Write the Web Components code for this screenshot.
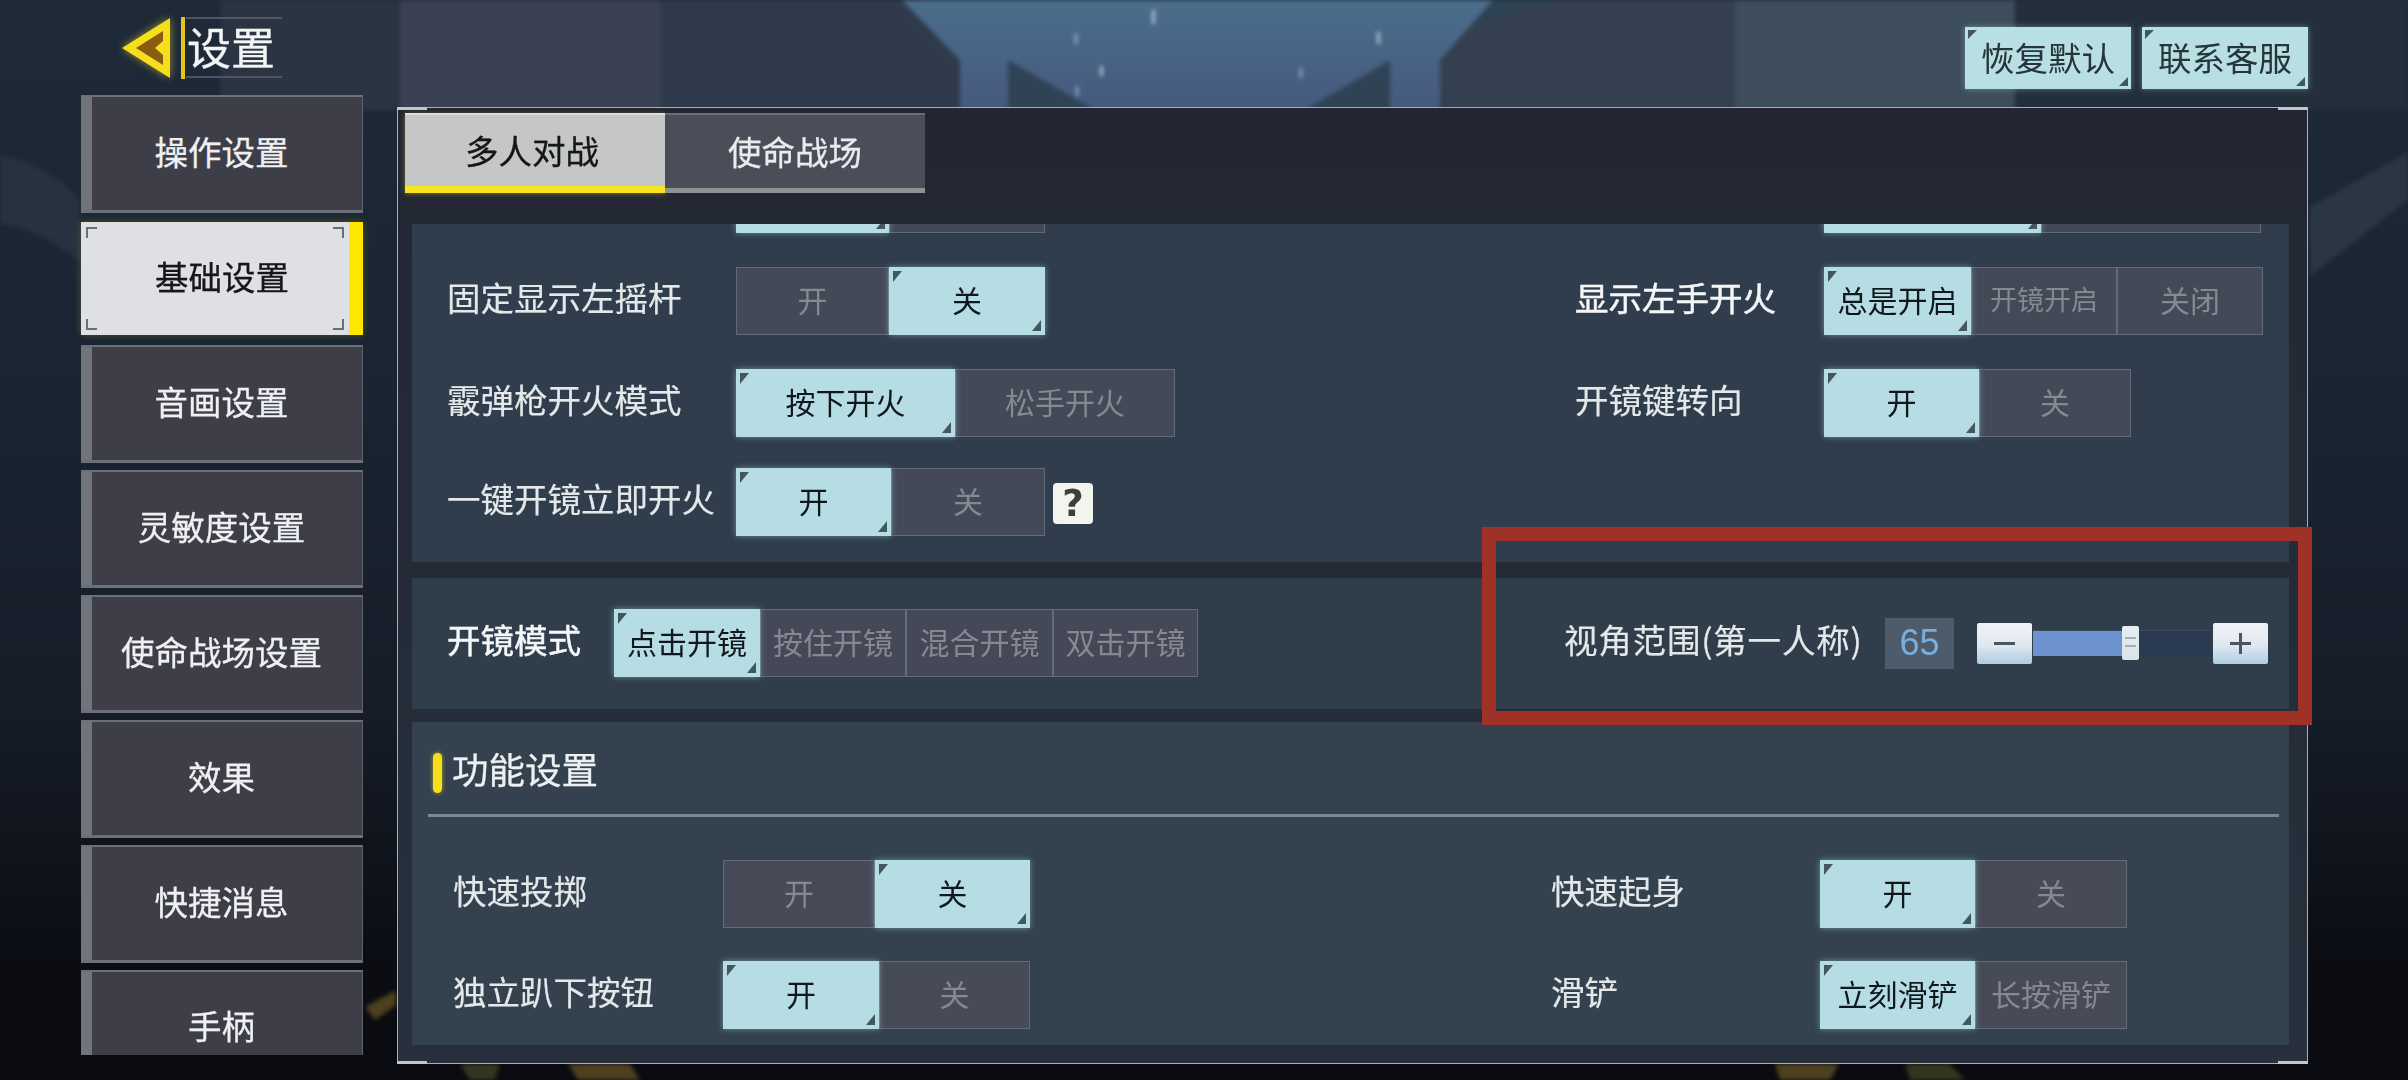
<!DOCTYPE html>
<html lang="zh">
<head>
<meta charset="utf-8">
<title>设置</title>
<style>
  html, body { margin: 0; padding: 0; background: #0b0d13; }
  body { font-family: "Noto Sans CJK SC", "Liberation Sans", sans-serif; }
</style>
</head>
<body>

<settings-screen>
  <screen-header slot="header">
    <corner-button>恢复默认</corner-button>
    <corner-button>联系客服</corner-button>
  </screen-header>

  <side-nav slot="nav">
    <nav-item>操作设置</nav-item>
    <nav-item active>基础设置</nav-item>
    <nav-item>音画设置</nav-item>
    <nav-item>灵敏度设置</nav-item>
    <nav-item>使命战场设置</nav-item>
    <nav-item>效果</nav-item>
    <nav-item>快捷消息</nav-item>
    <nav-item last>手柄</nav-item>
  </side-nav>

  <settings-frame slot="main">
    <mode-tab slot="tabs" active>多人对战</mode-tab>
    <mode-tab slot="tabs">使命战场</mode-tab>

    <setting-panel style="--pad:0 0 0 35px;--c1:1128px;--bg:#2f3d4c;height:338px;margin-top:31px">
      <setting-row style="--label-w:289px;margin-top:-59px"><seg-toggle slot="control" options="," active="0" cols="153,156"></seg-toggle></setting-row>
      <setting-row style="--label-w:249px;margin-top:-59px"><seg-toggle slot="control" options="," active="0" cols="217,220"></seg-toggle></setting-row>

      <setting-row style="--label-w:289px">固定显示左摇杆<seg-toggle slot="control" options="开,关" active="1" cols="153,156"></seg-toggle></setting-row>
      <setting-row style="--label-w:249px" strong>显示左手开火<seg-toggle slot="control" options="总是开启,开镜开启,关闭" active="0" small="1" cols="147,146,146"></seg-toggle></setting-row>

      <setting-row style="--label-w:289px">霰弹枪开火模式<seg-toggle slot="control" options="按下开火,松手开火" active="0" cols="219,220"></seg-toggle></setting-row>
      <setting-row style="--label-w:249px">开镜键转向<seg-toggle slot="control" options="开,关" active="0" cols="155,152"></seg-toggle></setting-row>

      <setting-row style="--label-w:289px;margin-top:-3px">一键开镜立即开火<seg-toggle slot="control" options="开,关" active="0" cols="155,154"></seg-toggle><help-badge slot="control"></help-badge></setting-row>
    </setting-panel>

    <setting-panel style="--pad:31px 0 32px 35px;--c1:1117px;--bg:#303e4c;margin-top:16px">
      <setting-row style="--label-w:167px" strong>开镜模式<seg-toggle slot="control" options="点击开镜,按住开镜,混合开镜,双击开镜" active="0" cols="146,146,147,145"></seg-toggle></setting-row>
      <setting-row style="--label-w:321px;--label-ls:.8px">视角范围(第一人称)<fov-slider slot="control" value="65" percent="50"></fov-slider></setting-row>
    </setting-panel>

    <setting-panel style="--pad:0 0 16px 41px;--c1:1098px;--gap:33px;--bg:#33424e;margin-top:13px">
      <section-title slot="head">功能设置</section-title>
      <setting-row style="--label-w:270px">快速投掷<seg-toggle slot="control" options="开,关" active="1" cols="152,155"></seg-toggle></setting-row>
      <setting-row style="--label-w:269px">快速起身<seg-toggle slot="control" options="开,关" active="0" cols="155,152"></seg-toggle></setting-row>
      <setting-row style="--label-w:270px">独立趴下按钮<seg-toggle slot="control" options="开,关" active="0" cols="156,151"></seg-toggle></setting-row>
      <setting-row style="--label-w:269px">滑铲<seg-toggle slot="control" options="立刻滑铲,长按滑铲" active="0" cols="155,152"></seg-toggle></setting-row>
    </setting-panel>
  </settings-frame>

  <highlight-box slot="overlay"></highlight-box>
</settings-screen>

<script>
const FONT = '"Noto Sans CJK SC", "Liberation Sans", sans-serif';

class SettingsScreen extends HTMLElement {
  constructor() {
    super();
    this.attachShadow({ mode: "open" });
    this.shadowRoot.innerHTML = `
      <style>
        :host{
          display:block;
          position:relative;
          width:2408px;
          height:1080px;
          overflow:hidden;
          background:linear-gradient(180deg,#1e2a38 0,#1b2634 300px,#161d29 700px,#0b0d13 960px,#0a0b10 100%);
          font-family:${FONT};
          color:#e8ebee;
        }
        .bg{position:absolute;left:0;top:0;width:2408px;height:1080px;filter:blur(2px)}
        .layout{
          position:relative;
          display:grid;
          grid-template-columns:282px 1911px;
          grid-template-rows:95px 1fr;
          column-gap:34px;
          padding-left:81px;
          height:1080px;
          box-sizing:border-box;
          filter:blur(.55px);
        }
        .header{grid-column:1 / 3}
        .main{padding-top:12px}
      </style>
      <svg class="bg" viewBox="0 0 2408 1080" aria-hidden="true">
        <defs>
          <linearGradient id="core" x1="0" y1="0" x2="0" y2="1">
            <stop offset="0" stop-color="#4b6e8c"/><stop offset="1" stop-color="#46597c"/>
          </linearGradient>
        </defs>
        <rect x="220" y="0" width="180" height="110" fill="#2a3442"/>
        <rect x="400" y="0" width="260" height="110" fill="#3a4154"/>
        <rect x="660" y="0" width="300" height="110" fill="#2f3b4c"/>
        <rect x="1440" y="0" width="300" height="110" fill="#34404f"/>
        <polygon points="1440,30 1560,0 1440,0" fill="#2d4253"/>
        <rect x="1735" y="0" width="280" height="110" fill="#3d4d5b"/>
        <rect x="2015" y="0" width="393" height="110" fill="#242f3c"/>
        <polygon points="902,0 1493,0 1440,60 1440,110 960,110 960,60" fill="url(#core)"/>
        <polygon points="1008,60 1095,110 1008,110" fill="#2f4355"/>
        <polygon points="1390,60 1305,110 1390,110" fill="#2f4355"/>
        <g fill="#cfe0ee" opacity=".75">
          <rect x="1152" y="10" width="3" height="14"/><rect x="1377" y="32" width="3" height="12"/>
          <rect x="1075" y="34" width="2" height="10"/><rect x="1100" y="66" width="3" height="10"/>
          <rect x="1300" y="68" width="2" height="10"/><rect x="1076" y="86" width="2" height="10"/>
        </g>
        <path d="M0 155 Q50 165 80 200 L80 262 Q40 228 0 224Z" fill="#263240"/>
        <polygon points="2310,207 2408,152 2408,200 2310,276" fill="#2a3743"/>
        <g fill="#4e4120">
          <polygon points="568,1064 630,1064 640,1080 578,1080"/>
          <polygon points="1775,1064 1839,1064 1830,1080 1780,1080"/>
          <polygon points="365,1007 396,990 396,1005 375,1020"/>
        </g>
        <g fill="#33361f">
          <polygon points="460,1064 500,1064 495,1080 470,1080"/>
          <polygon points="1905,1064 1950,1064 1965,1080 1910,1080"/>
        </g>
      </svg>
      <div class="layout">
        <div class="header"><slot name="header"></slot></div>
        <div class="nav"><slot name="nav"></slot></div>
        <div class="main"><slot name="main"></slot></div>
        <slot name="overlay"></slot>
      </div>
    `;
  }
}

class ScreenHeader extends HTMLElement {
  constructor() {
    super();
    this.attachShadow({ mode: "open" });
    this.shadowRoot.innerHTML = `
      <style>
        :host{display:flex;height:95px;align-items:flex-start;justify-content:space-between}
        .back{display:flex;margin:17px 0 0 39px;align-items:stretch}
        svg{width:52px;height:62px;filter:drop-shadow(0 0 4px rgba(255,225,40,.55))}
        .bar{width:4px;background:#e5c51c;margin-left:9px}
        .title{
          width:96px;
          margin-left:1px;
          height:61px;
          box-sizing:border-box;
          border-top:2px solid #4f5662;
          border-bottom:2px solid #4f5662;
          padding-left:1px;
          font-size:44px;
          line-height:54px;
          color:#f2f4f5;
          -webkit-text-stroke:.3px currentColor;
        }
        .actions{display:flex;gap:11px;margin-top:27px}
      </style>
      <div class="back">
        <svg viewBox="0 0 52 62">
          <polygon points="2,31 50,1 50,61" fill="#f5df1c"/>
          <polygon points="16,31 43,14 43,24 35,31 43,38 43,48" fill="#8a5c12"/>
        </svg>
        <div class="bar"></div>
        <div class="title">设置</div>
      </div>
      <div class="actions"><slot></slot></div>
    `;
  }
}

class CornerButton extends HTMLElement {
  constructor() {
    super();
    this.attachShadow({ mode: "open" });
    this.shadowRoot.innerHTML = `
      <style>
        :host{
          display:flex;
          position:relative;
          width:166px;
          height:62px;
          box-sizing:border-box;
          padding-bottom:3px;
          align-items:center;
          justify-content:center;
          background:#b8dfe2;
          box-shadow:0 0 6px rgba(170,225,230,.45);
          color:#26343c;
          font-size:33.5px;
        }
        i{position:absolute;width:9px;height:9px}
        .a{left:3px;top:3px;background:#43585c;clip-path:polygon(0 0,100% 0,0 100%)}
        .b{right:3px;bottom:3px;background:#43585c;clip-path:polygon(100% 0,100% 100%,0 100%)}
      </style>
      <i class="a"></i><i class="b"></i><slot></slot>
    `;
  }
}

class SideNav extends HTMLElement {
  constructor() {
    super();
    this.attachShadow({ mode: "open" });
    this.shadowRoot.innerHTML = `
      <style>:host{display:flex;flex-direction:column;gap:7px}</style>
      <slot></slot>
    `;
  }
}

class NavItem extends HTMLElement {
  constructor() {
    super();
    this.attachShadow({ mode: "open" });
    this.shadowRoot.innerHTML = `
      <style>
        :host{
          display:flex;
          position:relative;
          height:118px;
          box-sizing:border-box;
          padding-bottom:6px;
          align-items:center;
          justify-content:center;
          font-size:33.5px;
          color:#eef0f2;
          background:#3e3e49;
          border-top:2px solid #6d7078;
          border-right:1px solid #5f626a;
          border-bottom:3px solid #6d7078;
          box-shadow:inset 11px 0 #70747b;
          -webkit-text-stroke:.3px currentColor;
        }
        :host([active]){
          height:113px;
          margin:2px 0 3px;
          border:0;
          background:#dfe0e4;
          color:#15171a;
          box-shadow:inset -14px 0 #ffe600, 0 0 7px rgba(255,225,30,.25);
        }
        :host([last]){height:85px;border-bottom:0;padding:22px 0 0}
        i{display:none;position:absolute;width:9px;height:9px;border:0 solid #6a6e72}
        :host([active]) i{display:block}
        .tl{left:5px;top:5px;border-width:2px 0 0 2px}
        .tr{right:19px;top:5px;border-width:2px 2px 0 0}
        .bl{left:5px;bottom:5px;border-width:0 0 2px 2px}
        .br{right:19px;bottom:5px;border-width:0 2px 2px 0}
      </style>
      <i class="tl"></i><i class="tr"></i><i class="bl"></i><i class="br"></i>
      <slot></slot>
    `;
  }
}

class SettingsFrame extends HTMLElement {
  constructor() {
    super();
    this.attachShadow({ mode: "open" });
    this.shadowRoot.innerHTML = `
      <style>
        :host{
          display:block;
          position:relative;
          height:957px;
          box-sizing:border-box;
          padding:5px 18px 0 14px;
          background:linear-gradient(180deg,#232632 0,#222834 120px,#27303c 100%);
          border:1px solid #a9afb6;
        }
        .tabs{display:flex;margin-left:-7px}
        i{position:absolute;width:30px;height:3px;background:#c2c7cb}
        .tl{left:-1px;top:-1px}.tr{right:-1px;top:-1px}
        .bl{left:-1px;bottom:-1px}.br{right:-1px;bottom:-1px}
      </style>
      <i class="tl"></i><i class="tr"></i><i class="bl"></i><i class="br"></i>
      <div class="tabs"><slot name="tabs"></slot></div>
      <slot></slot>
    `;
  }
}

class ModeTab extends HTMLElement {
  constructor() {
    super();
    this.attachShadow({ mode: "open" });
    this.shadowRoot.innerHTML = `
      <style>
        :host{
          display:flex;
          width:260px;
          height:80px;
          box-sizing:border-box;
          align-items:center;
          justify-content:center;
          padding-bottom:2px;
          font-size:33.5px;
          color:#e9ebee;
          background:#4b4d58;
          border-top:2px solid #6b6e76;
          border-bottom:5px solid #8f9295;
          -webkit-text-stroke:.3px currentColor;
        }
        :host([active]){
          background:#c5c6c6;
          color:#14161a;
          border-top:2px solid #dcdddd;
          border-bottom:7px solid #f4e422;
          box-shadow:0 1px 5px rgba(255,230,40,.35);
          padding-right:6px;
        }
      </style>
      <slot></slot>
    `;
  }
}

class SettingPanel extends HTMLElement {
  constructor() {
    super();
    this.attachShadow({ mode: "open" });
    this.shadowRoot.innerHTML = `
      <style>
        :host{
          display:block;
          overflow:hidden;
          box-sizing:border-box;
          padding:var(--pad);
          background:var(--bg);
        }
        .grid{
          display:grid;
          grid-template-columns:var(--c1) 1fr;
          row-gap:var(--gap,34px);
        }
      </style>
      <slot name="head"></slot>
      <div class="grid"><slot></slot></div>
    `;
  }
}

class SectionTitle extends HTMLElement {
  constructor() {
    super();
    this.attachShadow({ mode: "open" });
    this.shadowRoot.innerHTML = `
      <style>
        :host{
          display:flex;
          align-items:center;
          gap:10px;
          height:95px;
          margin:0 10px 43px -25px;
          padding:10px 0 0 5px;
          border-bottom:3px solid #7c8892;
          box-sizing:border-box;
          font-size:36.5px;
          color:#eef1f3;
          -webkit-text-stroke:.3px currentColor;
        }
        i{
          width:9px;
          height:40px;
          border-radius:5px;
          background:#f5df1c;
          box-shadow:0 0 4px rgba(255,225,30,.6);
        }
        span{margin-bottom:9px}
      </style>
      <i></i><span><slot></slot></span>
    `;
  }
}

class SettingRow extends HTMLElement {
  constructor() {
    super();
    this.attachShadow({ mode: "open" });
    this.shadowRoot.innerHTML = `
      <style>
        :host{display:flex;align-items:center;height:68px}
        .label{
          flex:0 0 var(--label-w);
          font-size:33.5px;
          line-height:44px;
          letter-spacing:var(--label-ls,0);
          white-space:nowrap;
          color:#e4e8ea;
          padding-bottom:8px;
          -webkit-text-stroke:.2px currentColor;
        }
        :host([strong]) .label{color:#f5f6f7;-webkit-text-stroke:.5px currentColor}
        .control{display:flex;align-items:center;gap:8px}
      </style>
      <div class="label"><slot></slot></div>
      <div class="control"><slot name="control"></slot></div>
    `;
  }
}

class SegToggle extends HTMLElement {
  constructor() {
    super();
    this.attachShadow({ mode: "open" });
  }

  connectedCallback() {
    const options = this.getAttribute("options").split(",");
    const active = Number(this.getAttribute("active"));
    const small = this.getAttribute("small");
    const cols = this.getAttribute("cols").split(",").map((c) => c + "px").join(" ");
    const cells = options.map((text, i) => {
      let cls = "opt";
      if (i === active) cls += " on";
      if (String(i) === small) cls += " small";
      return `<div class="${cls}"><i class="a"></i><i class="b"></i>${text}</div>`;
    }).join("");
    this.shadowRoot.innerHTML = `
      <style>
        :host{display:grid;height:68px;grid-template-columns:${cols}}
        .opt{
          position:relative;
          display:flex;
          align-items:center;
          justify-content:center;
          box-sizing:border-box;
          padding-bottom:5px;
          font-size:30px;
          color:#858992;
          background:rgba(82,80,94,.62);
          border:1px solid rgba(140,158,168,.42);
          white-space:nowrap;
        }
        .opt.small{font-size:27px}
        .opt.on{
          z-index:1;
          color:#10181e;
          background:#b6dde3;
          border-color:#b6dde3;
          box-shadow:0 0 6px rgba(170,225,230,.5);
        }
        i{display:none;position:absolute;width:9px;height:11px;background:#43585c}
        .on i{display:block}
        .a{left:3px;top:3px;clip-path:polygon(0 0,100% 0,0 100%)}
        .b{right:3px;bottom:3px;clip-path:polygon(100% 0,100% 100%,0 100%)}
      </style>
      ${cells}
    `;
  }
}

class HelpBadge extends HTMLElement {
  constructor() {
    super();
    this.attachShadow({ mode: "open" });
    this.shadowRoot.innerHTML = `
      <style>
        :host{
          display:flex;
          width:40px;
          height:41px;
          margin-top:2px;
          align-items:center;
          justify-content:center;
          border-radius:4px;
          background:#f4f4ee;
          color:#3e3e3c;
          font:bold 37px "DejaVu Sans", sans-serif;
        }
      </style>
      ?
    `;
  }
}

class FovSlider extends HTMLElement {
  constructor() {
    super();
    this.attachShadow({ mode: "open" });
  }

  connectedCallback() {
    const value = this.getAttribute("value");
    const percent = this.getAttribute("percent");
    this.shadowRoot.innerHTML = `
      <style>
        :host{display:flex;align-items:center}
        .value{
          width:69px;
          height:51px;
          margin-right:23px;
          display:flex;
          align-items:center;
          justify-content:center;
          background:#4d5b6a;
          color:#79aedc;
          font:36px "Liberation Sans", sans-serif;
        }
        .step{
          position:relative;
          width:55px;
          height:41px;
          border-radius:2px;
          background:linear-gradient(180deg,#f0f3f6 0,#dfe8f0 55%,#aecde2 100%);
        }
        .step::before{
          content:"";
          position:absolute;
          left:17px;
          top:19px;
          width:21px;
          height:3px;
          background:#4b5663;
        }
        .plus::after{
          content:"";
          position:absolute;
          left:26px;
          top:10px;
          width:3px;
          height:21px;
          background:#4b5663;
        }
        .track{
          position:relative;
          width:178px;
          height:26px;
          margin:0 2px 0 1px;
          background:#2a3a50;
          border-top:1px solid #3a4a60;
          box-sizing:border-box;
        }
        .fill{width:${percent}%;height:100%;background:#6c92d0}
        .thumb{
          position:absolute;
          left:${percent}%;
          top:-5px;
          width:17px;
          height:34px;
          border-radius:2px;
          background:linear-gradient(180deg,#e8eef0 0,#d8e4e8 100%);
        }
        .thumb::before{
          content:"";
          position:absolute;
          left:3px;
          right:3px;
          top:11px;
          height:6px;
          border-top:2px solid #a5aeb4;
          border-bottom:2px solid #a5aeb4;
        }
      </style>
      <div class="value">${value}</div>
      <div class="step"></div>
      <div class="track"><div class="fill"></div><div class="thumb"></div></div>
      <div class="step plus"></div>
    `;
  }
}

class HighlightBox extends HTMLElement {
  constructor() {
    super();
    this.attachShadow({ mode: "open" });
    this.shadowRoot.innerHTML = `
      <style>
        :host{
          position:absolute;
          left:1482px;
          top:527px;
          width:830px;
          height:198px;
          box-sizing:border-box;
          border:14px solid #9f3127;
        }
      </style>
    `;
  }
}

customElements.define("settings-screen", SettingsScreen);
customElements.define("screen-header", ScreenHeader);
customElements.define("corner-button", CornerButton);
customElements.define("side-nav", SideNav);
customElements.define("nav-item", NavItem);
customElements.define("settings-frame", SettingsFrame);
customElements.define("mode-tab", ModeTab);
customElements.define("setting-panel", SettingPanel);
customElements.define("section-title", SectionTitle);
customElements.define("setting-row", SettingRow);
customElements.define("seg-toggle", SegToggle);
customElements.define("help-badge", HelpBadge);
customElements.define("fov-slider", FovSlider);
customElements.define("highlight-box", HighlightBox);
</script>
</body>
</html>
